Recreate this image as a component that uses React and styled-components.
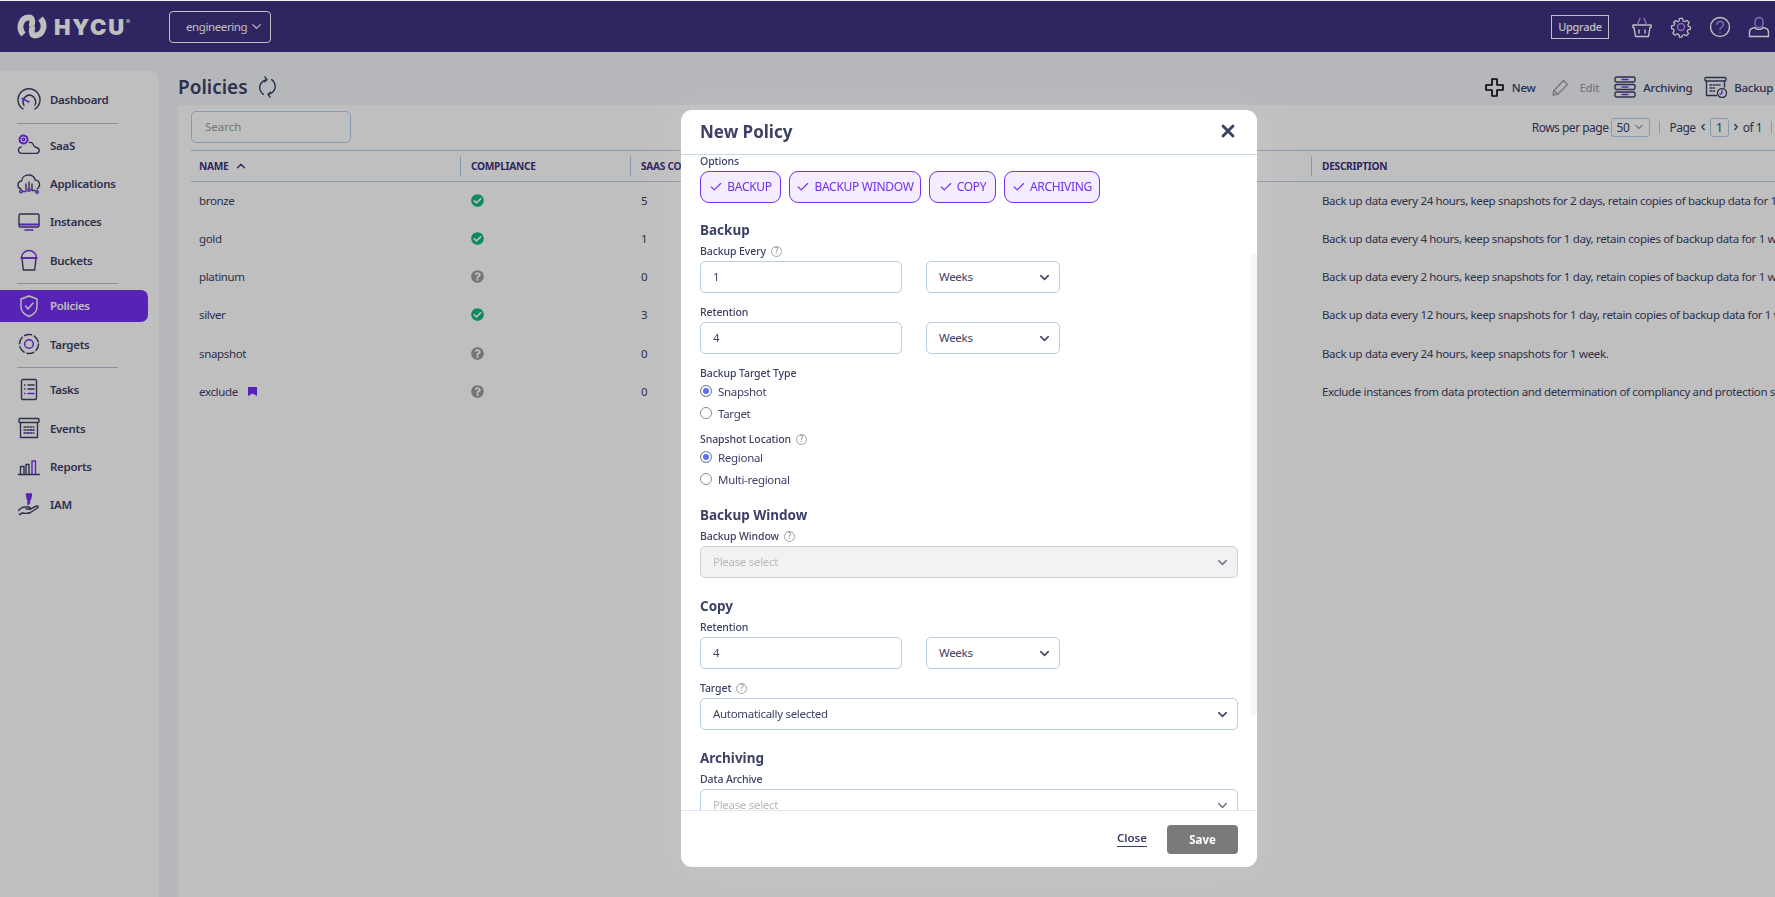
import React from "react";
import styled, { createGlobalStyle } from "styled-components";
import { ChevronDown, ChevronUp, ChevronLeft, ChevronRight, Check, X } from "lucide-react";
import { FaCheckCircle, FaQuestionCircle } from "react-icons/fa";

const INK = "#3c4166";
const NAVY = "#3f3280";
const VIOLET = "#742ff0";
const LINE = "#b9cce4";

const GlobalStyle = createGlobalStyle`
  html, body {
    margin: 0;
    height: 100%;
    overflow: hidden;
    background: #fff;
  }
  body {
    font-family: "Noto Sans", "Liberation Sans", sans-serif;
    letter-spacing: -0.3px;
    color: ${INK};
  }
  * { box-sizing: border-box; }
`;

const Page = styled.div`
  display: flex;
  flex-direction: column;
  height: 100vh;
  padding-top: 1px;
  background: #f3f4f9;
`;

const TopBar = styled.header`
  display: flex;
  align-items: center;
  flex: 0 0 51px;
  padding: 0 5px 0 17px;
  background: ${NAVY};
  color: #fff;
`;

const Logo = styled.div`
  display: flex;
  align-items: center;
  gap: 7px;
  width: 152px;
`;

const LogoWord = styled.span`
  font-family: "Inter", "Liberation Sans", sans-serif;
  font-weight: 900;
  font-size: 22px;
  line-height: 1;
  letter-spacing: 1.8px;
  sup {
    font-size: 6px;
    font-weight: 500;
    vertical-align: 11px;
    margin-left: 0;
    letter-spacing: 0;
  }
`;

const EnvButton = styled.div`
  display: flex;
  align-items: center;
  justify-content: space-between;
  width: 102px;
  height: 32px;
  padding: 0 6px 0 16px;
  border: 1px solid #fff;
  border-radius: 4px;
  font-size: 11.5px;
  letter-spacing: -0.4px;
  svg { flex-shrink: 0; }
`;

const TopActions = styled.div`
  display: flex;
  align-items: center;
  gap: 17px;
  margin-left: auto;
`;

const UpgradeButton = styled.div`
  display: flex;
  align-items: center;
  justify-content: center;
  width: 58px;
  height: 24px;
  margin-right: 5px;
  border: 1px solid #fff;
  font-size: 11px;
  font-weight: 500;
`;

const Layout = styled.div`
  display: flex;
  flex: 1;
  min-height: 0;
`;

const Sidebar = styled.nav`
  flex: 0 0 159px;
  margin-top: 19px;
  padding-top: 9.5px;
  background: #fff;
  border-top-right-radius: 9px;
`;

const NavRow = styled.div`
  display: flex;
  align-items: center;
  height: 38.25px;
  padding: 3px 11px 3px 0;
`;

const NavPill = styled.div`
  display: flex;
  align-items: center;
  flex: 1;
  height: 100%;
  padding-left: 17px;
  border-radius: ${(p) => (p.$active ? "0 7px 7px 0" : "0")};
  background: ${(p) => (p.$active ? VIOLET : "transparent")};
  color: ${(p) => (p.$active ? "#fff" : INK)};
  font-size: 11.5px;
  font-weight: 600;
`;

const NavIcon = styled.span`
  display: flex;
  justify-content: center;
  width: 24px;
  margin-right: 9px;
`;

const NavDivider = styled.hr`
  width: 101px;
  height: 1px;
  margin: 4px 0 2.5px 17px;
  border: 0;
  background: #bcbdd0;
`;

const Main = styled.main`
  display: flex;
  flex-direction: column;
  flex: 1;
  min-width: 0;
  margin-left: 19px;
`;

const TitleBar = styled.div`
  display: flex;
  align-items: center;
  justify-content: space-between;
  flex: 0 0 53px;
  padding: 17px 2px 0 0;
`;

const TitleGroup = styled.div`
  display: flex;
  align-items: center;
  gap: 9px;
`;

const Title = styled.h1`
  margin: 0;
  font-size: 19px;
  font-weight: 600;
  line-height: 1;
  letter-spacing: 0;
`;

const Actions = styled.div`
  display: flex;
  align-items: center;
`;

const Action = styled.div`
  display: flex;
  align-items: center;
  gap: ${(p) => p.$inner || 7}px;
  margin-left: ${(p) => p.$gap || 0}px;
  color: ${(p) => (p.$off ? "#a3a3a8" : INK)};
  font-size: 11.5px;
  font-weight: 500;
`;

const Panel = styled.section`
  flex: 1;
  min-height: 0;
  overflow: hidden;
  padding: 6px 0 0 13px;
  background: #fff;
`;

const PanelTools = styled.div`
  display: flex;
  align-items: center;
  justify-content: space-between;
  height: 32px;
  margin-bottom: 7px;
`;

const Search = styled.input`
  width: 160px;
  height: 32px;
  padding: 0 13px 2px;
  border: 1px solid ${LINE};
  border-radius: 5px;
  outline: none;
  background: transparent;
  font: inherit;
  font-size: 11.5px;
  &::placeholder { color: #9c9c9c; }
`;

const Pager = styled.div`
  display: flex;
  align-items: center;
  gap: 2px;
  padding-right: 3px;
  font-size: 12px;
  letter-spacing: -0.5px;
`;

const PagerBox = styled.div`
  display: flex;
  align-items: center;
  justify-content: center;
  gap: 4px;
  width: ${(p) => p.$w}px;
  height: 19px;
  margin-left: ${(p) => p.$left || 0}px;
  border: 1px solid ${LINE};
  border-radius: 3px;
`;

const PagerSep = styled.span`
  width: 1px;
  height: 12px;
  margin: ${(p) => (p.$end ? "0 0 0 7px" : "0 7px")};
  background: ${LINE};
`;

const Row = styled.div`
  display: grid;
  grid-template-columns: 269px 170px 681px 1fr;
  align-items: center;
  height: ${(p) => (p.$head ? "32px" : "38.25px")};
  ${(p) => p.$head && `
    border-top: 1px solid ${LINE};
    border-bottom: 1px solid ${LINE};
  `}
`;

const HeadCell = styled.div`
  display: flex;
  align-items: center;
  gap: 6px;
  height: 20px;
  padding-left: ${(p) => (p.$first ? 8 : 10)}px;
  border-left: ${(p) => (p.$first ? "none" : `1px solid ${LINE}`)};
  color: ${NAVY};
  font-size: 10.2px;
  font-weight: 700;
  white-space: nowrap;
`;

const Cell = styled.div`
  display: flex;
  align-items: center;
  gap: 10px;
  padding: 0 0 2px ${(p) => (p.$first ? 8 : 11)}px;
  font-size: 11.5px;
  letter-spacing: -0.35px;
  white-space: nowrap;
`;

const Backdrop = styled.div`
  position: fixed;
  inset: 1px 0 0 0;
  padding: 109px 0 0 681px;
  background: rgba(0, 0, 0, 0.25);
`;

const Modal = styled.div`
  display: flex;
  flex-direction: column;
  width: 576px;
  height: 757px;
  border-radius: 11px;
  background: #fff;
  box-shadow: 0 0 40px rgba(255, 255, 255, 0.12);
  overflow: hidden;
`;

const ModalHead = styled.div`
  display: flex;
  align-items: center;
  justify-content: space-between;
  flex: 0 0 45px;
  padding: 0 19px 2px;
  border-bottom: 1px solid #c8d7e8;
`;

const ModalTitle = styled.h2`
  margin: 0;
  font-size: 17px;
  font-weight: 700;
  letter-spacing: 0;
`;

const ModalBody = styled.div`
  position: relative;
  flex: 1;
  min-height: 0;
  overflow: hidden;
  padding: 0 19px;
`;

const ScrollThumb = styled.div`
  position: absolute;
  top: 98px;
  right: 0;
  width: 7px;
  height: 463px;
  border-radius: 4px;
  background: #f6f7fb;
`;

const Label = styled.div`
  display: flex;
  align-items: center;
  gap: 5px;
  height: 14px;
  padding-bottom: 2px;
  margin-top: ${(p) => p.$top || 0}px;
  margin-bottom: ${(p) => (p.$flush ? 0 : 2)}px;
  font-size: 10.5px;
  font-weight: 500;
  letter-spacing: -0.1px;
`;

const ChipRow = styled.div`
  display: flex;
  gap: 8px;
`;

const Chip = styled.div`
  display: flex;
  align-items: center;
  justify-content: center;
  gap: 4px;
  width: ${(p) => p.$w}px;
  height: 32px;
  padding-bottom: 1px;
  border: 1px solid ${VIOLET};
  border-radius: 9px;
  background: #f3edff;
  color: ${VIOLET};
  font-size: 12px;
`;

const SectionTitle = styled.h3`
  margin: ${(p) => p.$top}px 0 7px;
  font-size: 13.5px;
  font-weight: 700;
  line-height: 16px;
  letter-spacing: 0;
`;

const FieldRow = styled.div`
  display: flex;
  gap: 24px;
`;

const TextField = styled.input`
  width: 202px;
  height: 32px;
  padding: 0 12px 2px;
  border: 1px solid ${LINE};
  border-radius: 5px;
  outline: none;
  font: inherit;
  font-size: 11.5px;
  color: ${INK};
`;

const Select = styled.div`
  display: flex;
  align-items: center;
  justify-content: space-between;
  width: ${(p) => (p.$short ? "134px" : "100%")};
  height: 32px;
  padding: 0 7px 2px 12px;
  border: 1px solid ${(p) => (p.$off ? "#d0d0d0" : LINE)};
  border-radius: 5px;
  background: ${(p) => (p.$off ? "#f2f2f2" : "#fff")};
  color: ${(p) => (p.$muted ? "#b8b8bd" : INK)};
  font-size: 11.5px;
  svg { color: ${(p) => (p.$muted ? "#77798c" : INK)}; margin-top: 2px; }
`;

const RadioRow = styled.label`
  display: flex;
  align-items: center;
  gap: 6px;
  height: 20px;
  margin-bottom: 2px;
  font-size: 11.5px;
`;

const RadioDot = styled.span`
  width: 12px;
  height: 12px;
  border: 1px solid #8b8b8b;
  border-radius: 50%;
  background: ${(p) => (p.$on ? "#5c6ff5" : "#fff")};
  box-shadow: ${(p) => (p.$on ? "inset 0 0 0 2px #fff" : "none")};
`;

const ModalFoot = styled.div`
  display: flex;
  align-items: center;
  justify-content: flex-end;
  gap: 20px;
  flex: 0 0 57px;
  padding: 0 19px 0 0;
  border-top: 1px solid #dfe7f1;
`;

const CloseLink = styled.span`
  padding-bottom: 1px;
  border-bottom: 1px solid ${INK};
  font-size: 11.5px;
  font-weight: 600;
  line-height: 14px;
  letter-spacing: 0;
`;

const SaveButton = styled.div`
  display: flex;
  align-items: center;
  justify-content: center;
  width: 71px;
  height: 29px;
  border-radius: 4px;
  background: #7a7a7a;
  color: #fff;
  font-size: 11.5px;
  font-weight: 700;
  letter-spacing: 0;
`;

const HelpMark = styled.span`
  display: inline-flex;
  align-items: center;
  justify-content: center;
  width: 11px;
  height: 11px;
  border: 1px solid #a0a0a0;
  border-radius: 50%;
  color: #909090;
  font-size: 8px;
  line-height: 1;
`;

const Svg = ({ w = 24, h = 24, vb, children }) => (
  <svg width={w} height={h} viewBox={vb || `0 0 ${w} ${h}`} fill="none" stroke="currentColor" strokeWidth="1.4" strokeLinecap="round" strokeLinejoin="round">
    {children}
  </svg>
);

const LogoMark = () => (
  <svg width="30" height="25" viewBox="0 0 30 25" fill="none" stroke="#fff" strokeWidth="5.800">
    <path d="M6.500 20.500C.5 14 4 3.500 12 3.500c3.500 0 3.800 4 2.500 9" />
    <path d="M23.500 4.500c6 6.500 2.500 17-5.500 17c-3.500 0-3.800-4-2.500-9" />
  </svg>
);

const Accent = ({ children }) => <g stroke={VIOLET}>{children}</g>;

const navIcons = {
  dashboard: (
    <Svg>
      <path d="M6 21a11 11 0 1 1 12 0" />
      <path d="M7 17.500a7 7 0 0 1 5-10.500a7 7 0 0 1 6 10" />
      <Accent><path d="M5 10.500l7 3.500" /></Accent>
    </Svg>
  ),
  saas: (
    <Svg>
      <path d="M12.500 9.500c1.500-.3 2.800.3 3.500 1.600c.6 1.800 1.800 2.900 3.500 3.400c4 1.200 3.300 5.900-.5 5.900H5c-2.200 0-3.500-1.500-3.500-3.300c0-1.700 1.200-3 2.800-3.200" />
      <Accent>
        <circle cx="6.500" cy="6.500" r="1.200" />
        <circle cx="6.500" cy="6.500" r="4" strokeDasharray="2 1.100" strokeWidth="2" />
      </Accent>
    </Svg>
  ),
  apps: (
    <Svg>
      <path d="M4 17c-2-.5-3-2-3-4c0-2.200 1.600-3.800 3.600-4c.3-3.500 3.200-6 7-6c3.300 0 5.800 2 6.500 5c2.500 0 4.400 2 4.400 4.500c0 2-1 3.600-2.500 4.300" />
      <path d="M9 12v6M12 10v6M15 12v6.500h3" />
      <Accent>
        <circle cx="4" cy="19.500" r="1.300" />
        <circle cx="12" cy="18" r="1.300" />
        <circle cx="20" cy="20" r="1.300" />
        <path d="M5.300 19.500H9" />
      </Accent>
    </Svg>
  ),
  instances: (
    <Svg>
      <rect x="2" y="4" width="20" height="13" rx="1.500" />
      <Accent>
        <path d="M2.500 14.500h19" strokeWidth="1.800" />
        <path d="M8 20h8" />
      </Accent>
    </Svg>
  ),
  buckets: (
    <Svg>
      <path d="M5 10h14l-1.300 12H6.300z" />
      <Accent><path d="M4.500 10a7.500 7.500 0 0 1 15 0" /><path d="M4 10h16" /></Accent>
    </Svg>
  ),
  policies: (
    <Svg>
      <path d="M12 2l8 3v8c0 4.500-3.500 7.500-8 9.500c-4.500-2-8-5-8-9.500V5z" />
      <path d="M8.500 12l2.500 3l5-6" />
    </Svg>
  ),
  targets: (
    <Svg>
      <circle cx="12" cy="12" r="9.500" strokeDasharray="7 3" strokeWidth="1.500" />
      <Accent><circle cx="12" cy="12" r="4.300" strokeWidth="1.500" /></Accent>
    </Svg>
  ),
  tasks: (
    <Svg>
      <rect x="4.500" y="1.500" width="15" height="20" rx="1.500" />
      <path d="M11 7h6M11 11h6" />
      <path d="M7.500 7h.5M7.500 11h.5" />
      <Accent><path d="M7.500 15.500h.5M11 15.500h6" /></Accent>
    </Svg>
  ),
  events: (
    <Svg>
      <rect x="2" y="2.500" width="20" height="4" rx="1" />
      <path d="M3.500 6.500V21.500h17V6.500" />
      <path d="M7 11h10M7 14h10M7 17h10" strokeDasharray="1.500 1.500" />
      <Accent><path d="M13 14h4M10 17h3" strokeDasharray="1.500 1.500" /></Accent>
    </Svg>
  ),
  reports: (
    <Svg>
      <path d="M1.500 20.500h21" />
      <path d="M3.500 20.500V12.500h3.500v8M9 20.500V10.500h3v10" />
      <Accent><path d="M15 20.500V7h3.500v13.500" /></Accent>
    </Svg>
  ),
  iam: (
    <Svg>
      <path d="M1.500 17.500c2-2 4-3.500 6-3.500h4.500c1.500 0 1.500 2 0 2h-3M12.500 16.500l7-3.500c1.500-.5 2.500 1 1 2l-7 4.500c-2.500 1-5.500 1-8 .5l-3 1.500" />
      <Accent>
        <path d="M9.500 1h5l-.8 5l-1.200 1v3l-1.500 1.500V7l-.8-1z" fill={VIOLET} />
      </Accent>
    </Svg>
  ),
};

const navGroups = [
  [{ id: "dashboard", label: "Dashboard" }],
  [
    { id: "saas", label: "SaaS" },
    { id: "apps", label: "Applications" },
    { id: "instances", label: "Instances" },
    { id: "buckets", label: "Buckets" },
  ],
  [
    { id: "policies", label: "Policies", active: true },
    { id: "targets", label: "Targets" },
  ],
  [
    { id: "tasks", label: "Tasks" },
    { id: "events", label: "Events" },
    { id: "reports", label: "Reports" },
    { id: "iam", label: "IAM" },
  ],
];

const policies = [
  { name: "bronze", ok: true, saas: 5, text: "Back up data every 24 hours, keep snapshots for 2 days, retain copies of backup data for 1 week and archive data for 1 year." },
  { name: "gold", ok: true, saas: 1, text: "Back up data every 4 hours, keep snapshots for 1 day, retain copies of backup data for 1 week and archive data for 1 year." },
  { name: "platinum", ok: false, saas: 0, text: "Back up data every 2 hours, keep snapshots for 1 day, retain copies of backup data for 1 week and archive data for 1 year." },
  { name: "silver", ok: true, saas: 3, text: "Back up data every 12 hours, keep snapshots for 1 day, retain copies of backup data for 1 week and archive data for 1 year." },
  { name: "snapshot", ok: false, saas: 0, text: "Back up data every 24 hours, keep snapshots for 1 week." },
  { name: "exclude", ok: false, saas: 0, flagged: true, text: "Exclude instances from data protection and determination of compliancy and protection status of instances." },
];

const Help = () => <HelpMark>?</HelpMark>;

const Chevron = () => <ChevronDown size={15} strokeWidth={2.4} />;

const Radio = ({ on, children }) => (
  <RadioRow>
    <RadioDot $on={on} />
    {children}
  </RadioRow>
);

const AmountField = ({ value }) => (
  <FieldRow>
    <TextField defaultValue={value} />
    <Select $short>
      Weeks
      <Chevron />
    </Select>
  </FieldRow>
);

const App = () => (
  <>
    <GlobalStyle />
    <Page>
      <TopBar>
        <Logo>
          <LogoMark />
          <LogoWord>HYCU<sup>®</sup></LogoWord>
        </Logo>
        <EnvButton>
          engineering
          <ChevronDown size={15} strokeWidth={1.8} />
        </EnvButton>
        <TopActions>
          <UpgradeButton>Upgrade</UpgradeButton>
          <Svg w={22} h={22}>
            <path d="M2 9h18v2.500h-1l-1.500 9h-13L3 11.500H2z" />
            <path d="M8 14v3M14 14v3" />
            <g stroke="#b98cff"><path d="M6.500 8.500L9 2.500M15.500 8.500L13 2.500" /></g>
          </Svg>
          <Svg w={22} h={22}>
            <circle cx="11" cy="11" r="3.500" stroke="#b98cff" />
            <path d="M9.300 1.500h3.400l.6 2.700l2 .9l2.400-1.500l2.400 2.400l-1.500 2.400l.9 2l2 .6v2.400l-2.700.6l-.9 2l1.500 2.400l-2.400 2.400l-2.400-1.500l-2 .9l-.6 2H9.300l-.6-2.700l-2-.9l-2.400 1.500l-2.400-2.400l1.500-2.400l-.9-2l-2-.6v-3l2.700-.6l.9-2L2.600 6.100L5 3.700l2.400 1.500l1.300-.6z" transform="translate(1.100 1.100) scale(.9)" />
          </Svg>
          <Svg w={22} h={22}>
            <circle cx="11" cy="11" r="9.500" />
            <g stroke="#b98cff"><path d="M8 8.500c0-4 6.500-4 6.500 0c0 2.500-3.500 2.500-3.500 5M11 16.500v.2" /></g>
          </Svg>
          <Svg w={22} h={22}>
            <g stroke="#b98cff"><rect x="7" y="1.500" width="8" height="10" rx="4" /></g>
            <path d="M7 11.500c-3.500.5-5.500 2-5.500 4.500v4.500h19V16c0-2.500-2-4-5.500-4.500c-1 2.500-7 2.500-8 0z" />
          </Svg>
        </TopActions>
      </TopBar>

      <Layout>
        <Sidebar>
          {navGroups.map((group, index) => (
            <React.Fragment key={group[0].id}>
              {index > 0 && <NavDivider />}
              {group.map((item) => (
                <NavRow key={item.id}>
                  <NavPill $active={item.active}>
                    <NavIcon>{navIcons[item.id]}</NavIcon>
                    {item.label}
                  </NavPill>
                </NavRow>
              ))}
            </React.Fragment>
          ))}
        </Sidebar>

        <Main>
          <TitleBar>
            <TitleGroup>
              <Title>Policies</Title>
              <Svg w={21} h={22} vb="0 0 20 21">
                <path d="M9 3.500C4 4.500 1.500 9 3 13.500c.6 1.800 1.600 3 3 4" />
                <path d="M7.500 1l2 2.500L7 5.500" />
                <path d="M11 17.500c5-1 7.500-5.500 6-10c-.6-1.800-1.600-3-3-4" />
                <path d="M12.500 20l-2-2.500l2.500-2" />
              </Svg>
            </TitleGroup>
            <Actions>
              <Action $inner={8}>
                <svg width="19" height="19" viewBox="0 0 19 19" fill="none" stroke="#000" strokeWidth="1.600" strokeLinejoin="round">
                  <path d="M7 1h5v6h6v5h-6v6H7v-6H1V7h6z" />
                </svg>
                New
              </Action>
              <Action $off $gap={16} $inner={9}>
                <Svg w={19} h={19}>
                  <path d="M2 17l1-4.500L12.500 2.500l4 4L7 16z" />
                  <path d="M3 12.500l3.500 3.500" />
                </Svg>
                Edit
              </Action>
              <Action $gap={15}>
                <Svg w={22} h={22}>
                  <rect x="1" y="1" width="20" height="5" rx="1.500" />
                  <rect x="1" y="8.500" width="20" height="5" rx="1.500" />
                  <rect x="1" y="16" width="20" height="5" rx="1.500" />
                  <Accent><path d="M8 3.500h6M8 11h6M8 18.500h6" /></Accent>
                </Svg>
                Archiving
              </Action>
              <Action $gap={12} $inner={6}>
                <Svg w={24} h={22}>
                  <rect x="1" y="1.500" width="21" height="3.500" rx="1" />
                  <path d="M2.500 5v14.500h10M20.500 5v6" />
                  <path d="M6 9h10M6 12h6M6 15h5" strokeDasharray="1.500 1.500" />
                  <circle cx="18" cy="17" r="4.500" />
                  <Accent><path d="M18 14.500V17l-2 1.500" /></Accent>
                </Svg>
                Backup
              </Action>
            </Actions>
          </TitleBar>

          <Panel>
            <PanelTools>
              <Search placeholder="Search" />
              <Pager>
                Rows per page
                <PagerBox $w={39} $left={1}>50 <ChevronDown size={12} strokeWidth={1.8} /></PagerBox>
                <PagerSep />
                Page
                <ChevronLeft size={10} strokeWidth={3} />
                <PagerBox $w={19}>1</PagerBox>
                <ChevronRight size={10} strokeWidth={3} />
                of 1
                <PagerSep $end />
              </Pager>
            </PanelTools>

            <Row $head>
              <HeadCell $first>NAME <ChevronUp size={14} strokeWidth={2.2} /></HeadCell>
              <HeadCell>COMPLIANCE</HeadCell>
              <HeadCell>SAAS COMPLIANCE</HeadCell>
              <HeadCell>DESCRIPTION</HeadCell>
            </Row>
            {policies.map((policy) => (
              <Row key={policy.name}>
                <Cell $first>
                  {policy.name}
                  {policy.flagged && (
                    <svg width="9" height="9" viewBox="0 0 9 9" fill={VIOLET}>
                      <path d="M0 0h9v9L4.500 6.500L0 9z" />
                    </svg>
                  )}
                </Cell>
                <Cell>
                  {policy.ok ? <FaCheckCircle size={13} color="#13b87f" /> : <FaQuestionCircle size={13} color="#9c9c9c" />}
                </Cell>
                <Cell>{policy.saas}</Cell>
                <Cell>{policy.text}</Cell>
              </Row>
            ))}
          </Panel>
        </Main>
      </Layout>

      <Backdrop>
        <Modal>
          <ModalHead>
            <ModalTitle>New Policy</ModalTitle>
            <X size={20} strokeWidth={3.5} />
          </ModalHead>
          <ModalBody>
            <ScrollThumb />
            <Label>Options</Label>
            <ChipRow>
              <Chip $w={81}><Check size={14} strokeWidth={2} />BACKUP</Chip>
              <Chip $w={132}><Check size={14} strokeWidth={2} />BACKUP WINDOW</Chip>
              <Chip $w={67}><Check size={14} strokeWidth={2} />COPY</Chip>
              <Chip $w={96}><Check size={14} strokeWidth={2} />ARCHIVING</Chip>
            </ChipRow>

            <SectionTitle $top={19}>Backup</SectionTitle>
            <Label>Backup Every <Help /></Label>
            <AmountField value="1" />
            <Label $top={13}>Retention</Label>
            <AmountField value="4" />
            <Label $top={13} $flush>Backup Target Type</Label>
            <Radio on>Snapshot</Radio>
            <Radio>Target</Radio>
            <Label $top={10} $flush>Snapshot Location <Help /></Label>
            <Radio on>Regional</Radio>
            <Radio>Multi-regional</Radio>

            <SectionTitle $top={18}>Backup Window</SectionTitle>
            <Label>Backup Window <Help /></Label>
            <Select $off $muted>Please select <Chevron /></Select>

            <SectionTitle $top={20}>Copy</SectionTitle>
            <Label>Retention</Label>
            <AmountField value="4" />
            <Label $top={13}>Target <Help /></Label>
            <Select>Automatically selected <Chevron /></Select>

            <SectionTitle $top={20}>Archiving</SectionTitle>
            <Label>Data Archive</Label>
            <Select $muted>Please select <Chevron /></Select>
          </ModalBody>
          <ModalFoot>
            <CloseLink>Close</CloseLink>
            <SaveButton>Save</SaveButton>
          </ModalFoot>
        </Modal>
      </Backdrop>
    </Page>
  </>
);

export default App;
